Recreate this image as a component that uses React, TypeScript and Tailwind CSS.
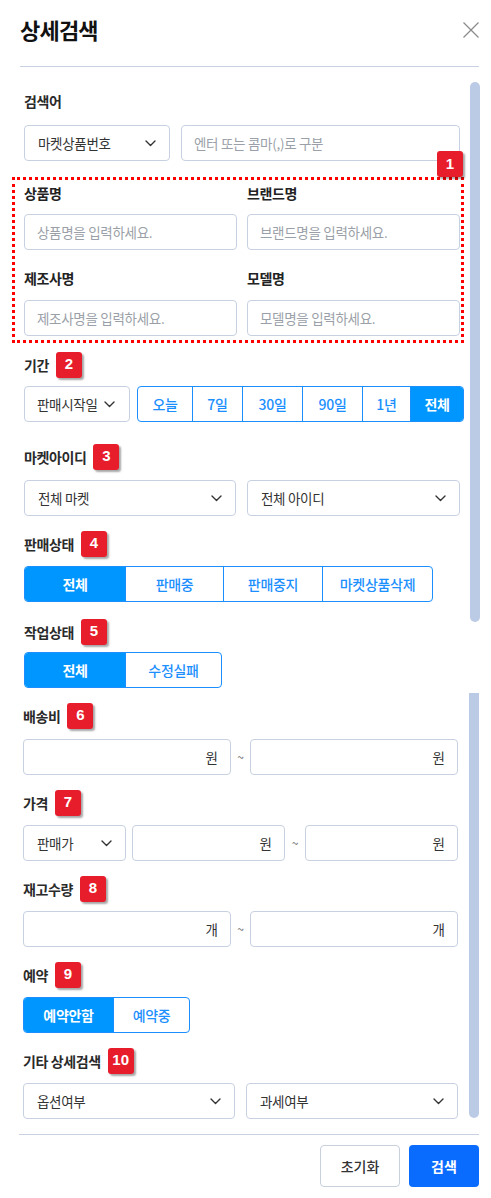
import React from "react";

const FONT = { fontFamily: '"Noto Sans CJK KR", "Noto Sans", sans-serif' };

function Chevron({ className = "" }: { className?: string }) {
  return (
    <svg width="11" height="7" viewBox="0 0 11 7" className={className} fill="none">
      <polyline points="1,1 5.5,5.5 10,1" stroke="#333" strokeWidth="1.4" strokeLinecap="round" strokeLinejoin="round" />
    </svg>
  );
}

function Badge({ n }: { n: string }) {
  return (
    <div
      className="w-[26px] h-[26px] rounded-[3px] bg-[#e81d2b] text-white flex items-center justify-center text-[15px] font-bold shadow-[2px_2px_2px_rgba(0,0,0,0.35)]"
      style={{ fontFamily: '"Liberation Sans", Arial, sans-serif' }}
    >
      {n}
    </div>
  );
}

function Header({ label, n }: { label: string; n: string }) {
  return (
    <div className="h-[27px] flex items-center gap-[7px]">
      <span className="text-[14px] font-semibold text-[#2a2a2a] tracking-[-0.4px] leading-[20px]">{label}</span>
      <Badge n={n} />
    </div>
  );
}

function Select({ text, className = "" }: { text: string; className?: string }) {
  return (
    <div className={"h-[36px] border border-[#c8d1e1] rounded-[4px] flex items-center justify-between pl-[13px] pr-[13px] bg-white " + className}>
      <span className="text-[13.5px] text-[#333] tracking-[-0.3px]">{text}</span>
      <Chevron />
    </div>
  );
}

function UnitInput({ unit, className = "" }: { unit: string; className?: string }) {
  return (
    <div className={"h-[36px] border border-[#c8d1e1] rounded-[4px] flex items-center justify-end pr-[12px] bg-white " + className}>
      <span className="text-[13.5px] text-[#333]">{unit}</span>
    </div>
  );
}

function TextInput({ ph, className = "" }: { ph: string; className?: string }) {
  return (
    <div className={"h-[36px] border border-[#c8d1e1] rounded-[4px] flex items-center pl-[12px] bg-white " + className}>
      <span className="text-[13.5px] text-[#9a9fa8] tracking-[-0.3px]">{ph}</span>
    </div>
  );
}

function Tilde() {
  return <span className="text-[12px] text-[#666] leading-none">~</span>;
}

function Group({ items, widths, className = "" }: { items: string[]; widths: string[]; className?: string }) {
  return (
    <div className={"h-[36px] flex border border-[#1c8fff] rounded-[4px] overflow-hidden " + className}>
      {items.map((t, i) => (
        <div
          key={t}
          className={
            widths[i] +
            " h-full flex items-center justify-center text-[14px] tracking-[-0.3px] " +
            (i > 0 ? "border-l border-[#1c8fff] " : "") +
            (t === items.find((x) => x === "전체" || x === "예약안함") ? "bg-[#0096ff] text-white font-bold" : "text-[#1c8fff] font-medium")
          }
        >
          {t}
        </div>
      ))}
    </div>
  );
}

function PeriodGroup() {
  const items = ["오늘", "7일", "30일", "90일", "1년", "전체"];
  const widths = ["w-[54px]", "w-[50px]", "w-[60px]", "w-[60px]", "w-[48px]", "flex-1"];
  return (
    <div className="h-[36px] w-[327px] flex border border-[#1c8fff] rounded-[4px] overflow-hidden">
      {items.map((t, i) => (
        <div
          key={t}
          className={
            widths[i] +
            " h-full flex items-center justify-center text-[14px] tracking-[-0.3px] " +
            (i > 0 ? "border-l border-[#1c8fff] " : "") +
            (t === "전체" ? "bg-[#0096ff] text-white font-bold" : "text-[#1c8fff] font-medium")
          }
        >
          {t}
        </div>
      ))}
    </div>
  );
}

export default function App() {
  return (
    <div className="w-[491px] h-[1198px] bg-white relative overflow-hidden" style={FONT}>
      {/* header */}
      <div className="h-[66px] flex items-start justify-between pl-[20px] pr-[12px]">
        <h1 className="pt-[14px] text-[22px] leading-[30px] font-bold text-[#111] tracking-[-0.8px]">상세검색</h1>
        <button className="mt-[22px] w-[16px] h-[16px]">
          <svg width="16" height="16" viewBox="0 0 16 16" fill="none">
            <line x1="0.5" y1="0.5" x2="15.5" y2="15.5" stroke="#8c8c8c" strokeWidth="1.2" />
            <line x1="15.5" y1="0.5" x2="0.5" y2="15.5" stroke="#8c8c8c" strokeWidth="1.2" />
          </svg>
        </button>
      </div>
      <div className="ml-[20px] w-[459px] h-px bg-[#c9d2e3]" />

      {/* content */}
      <div className="relative h-[1067px]">
        {/* scrollbar */}
        <div className="absolute left-[470px] top-[15px] w-[10px] h-[540px] rounded-full bg-[#bccbe5]" />
        <div className="absolute left-[469px] top-[626px] w-[10px] h-[425px] rounded-b-full bg-[#bccbe5]" />

        {/* 검색어 */}
        <div className="pl-[24px] pt-[24px]">
          <div className="text-[14px] font-semibold text-[#2a2a2a] tracking-[-0.4px] leading-[20px]">검색어</div>
          <div className="mt-[14px] flex gap-[11px]">
            <Select text="마켓상품번호" className="w-[146px]" />
            <TextInput ph="엔터 또는 콤마(,)로 구분" className="w-[279px]" />
          </div>
        </div>

        {/* boxed fields */}
        <div className="relative pl-[24px] pt-[22px]">
          <div className="absolute left-[12px] top-[16px] w-[452px] h-[166px] border-[3px] border-dotted border-[#ff0000] pointer-events-none" />
          <div className="absolute left-[437px] top-[-10px]">
            <Badge n="1" />
          </div>
          <div className="grid grid-cols-[213px_213px] gap-x-[10px]">
            <div>
              <div className="text-[14px] font-bold text-[#222] tracking-[-0.4px] leading-[20px]">상품명</div>
              <TextInput ph="상품명을 입력하세요." className="mt-[11px]" />
            </div>
            <div>
              <div className="text-[14px] font-bold text-[#222] tracking-[-0.4px] leading-[20px]">브랜드명</div>
              <TextInput ph="브랜드명을 입력하세요." className="mt-[11px]" />
            </div>
            <div className="mt-[18px]">
              <div className="text-[14px] font-bold text-[#222] tracking-[-0.4px] leading-[20px]">제조사명</div>
              <TextInput ph="제조사명을 입력하세요." className="mt-[12px]" />
            </div>
            <div className="mt-[18px]">
              <div className="text-[14px] font-bold text-[#222] tracking-[-0.4px] leading-[20px]">모델명</div>
              <TextInput ph="모델명을 입력하세요." className="mt-[12px]" />
            </div>
          </div>
        </div>

        {/* 기간 */}
        <div className="pl-[24px] mt-[15px]">
          <Header label="기간" n="2" />
          <div className="mt-[8px] flex gap-[7px]">
            <div className="w-[106px] h-[36px] border border-[#c8d1e1] rounded-[4px] flex items-center pl-[12px] gap-[6px]">
              <span className="text-[13.5px] text-[#333] tracking-[-0.3px]">판매시작일</span>
              <Chevron />
            </div>
            <PeriodGroup />
          </div>
        </div>

        {/* 마켓아이디 */}
        <div className="pl-[24px] mt-[21px]">
          <Header label="마켓아이디" n="3" />
          <div className="mt-[10px] flex gap-[11px]">
            <Select text="전체 마켓" className="w-[212px]" />
            <Select text="전체 아이디" className="w-[213px]" />
          </div>
        </div>

        {/* 판매상태 */}
        <div className="pl-[24px] mt-[14px]">
          <Header label="판매상태" n="4" />
          <Group
            className="mt-[9px] w-[409px]"
            items={["전체", "판매중", "판매중지", "마켓상품삭제"]}
            widths={["w-[100px]", "w-[98px]", "w-[99px]", "flex-1"]}
          />
        </div>

        {/* 작업상태 */}
        <div className="pl-[24px] mt-[16px]">
          <Header label="작업상태" n="5" />
          <Group className="mt-[7px] w-[198px]" items={["전체", "수정실패"]} widths={["w-[100px]", "flex-1"]} />
        </div>

        {/* 배송비 */}
        <div className="pl-[23px] mt-[14px]">
          <Header label="배송비" n="6" />
          <div className="mt-[10px] flex items-center">
            <UnitInput unit="원" className="w-[208px]" />
            <div className="w-[19px] flex justify-center"><Tilde /></div>
            <UnitInput unit="원" className="w-[208px]" />
          </div>
        </div>

        {/* 가격 */}
        <div className="pl-[23px] mt-[14px]">
          <Header label="가격" n="7" />
          <div className="mt-[9px] flex items-center">
            <Select text="판매가" className="w-[103px]" />
            <UnitInput unit="원" className="ml-[6px] w-[153px]" />
            <div className="w-[20px] flex justify-center"><Tilde /></div>
            <UnitInput unit="원" className="w-[153px]" />
          </div>
        </div>

        {/* 재고수량 */}
        <div className="pl-[23px] mt-[14px]">
          <Header label="재고수량" n="8" />
          <div className="mt-[9px] flex items-center">
            <UnitInput unit="개" className="w-[208px]" />
            <div className="w-[19px] flex justify-center"><Tilde /></div>
            <UnitInput unit="개" className="w-[208px]" />
          </div>
        </div>

        {/* 예약 */}
        <div className="pl-[23px] mt-[14px]">
          <Header label="예약" n="9" />
          <Group className="mt-[9px] w-[167px]" items={["예약안함", "예약중"]} widths={["w-[89px]", "flex-1"]} />
        </div>

        {/* 기타 상세검색 */}
        <div className="pl-[23px] mt-[14px]">
          <Header label="기타 상세검색" n="10" />
          <div className="mt-[9px] flex gap-[11px]">
            <Select text="옵션여부" className="w-[212px]" />
            <Select text="과세여부" className="w-[212px]" />
          </div>
        </div>
      </div>

      {/* footer */}
      <div className="ml-[19px] w-[460px] h-px bg-[#c9d2e3]" />
      <div className="flex justify-end gap-[9px] pr-[12px] pt-[10px]">
        <button className="w-[80px] h-[42px] border border-[#c8d0dc] rounded-[4px] bg-white text-[14px] font-medium text-[#333]">초기화</button>
        <button className="w-[70px] h-[42px] rounded-[4px] bg-[#0a6cff] text-[14px] font-semibold text-white">검색</button>
      </div>
    </div>
  );
}
